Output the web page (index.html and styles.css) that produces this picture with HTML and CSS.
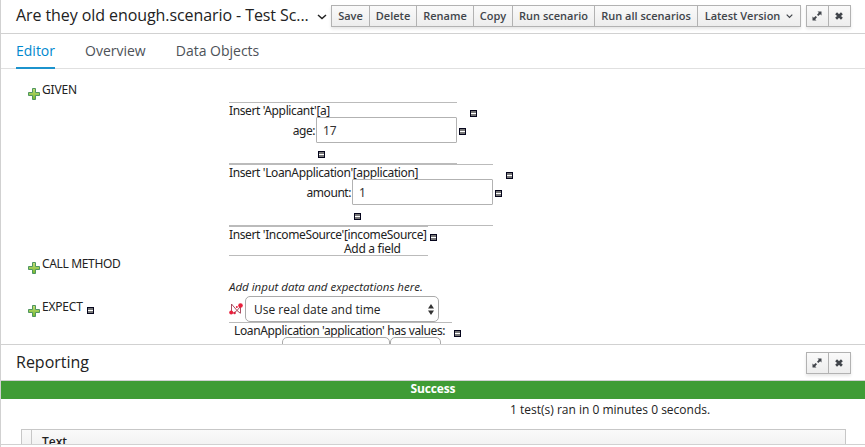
FILE: index.html
```html
<!DOCTYPE html>
<html lang="en">
<head>
<meta charset="utf-8">
<title>Test Scenario</title>
<link rel="stylesheet" href="styles.css">
</head>
<body>
<svg class="defs" width="0" height="0" aria-hidden="true">
  <defs>
    <linearGradient id="leaf" x1="0" y1="0" x2="0" y2="1"><stop offset="0" stop-color="#c5df78"/><stop offset="1" stop-color="#76b82c"/></linearGradient>
    <symbol id="plus" viewBox="0 0 12 12"><path d="M4.500 .5h3v4h4v3h-4v4h-3v-4h-4v-3h4z" fill="url(#leaf)" stroke="#4f9560"/></symbol>
    <symbol id="minus" viewBox="0 0 7 7"><path d="M0 0h7v7H0z" fill="#05051c"/><path d="M1 1h5v5H1z" fill="#777"/><path d="M1 3h5v1H1z" fill="#fff"/></symbol>
    <symbol id="expand" viewBox="0 0 10 10"><path d="M5.500 .5h4v4L8.200 3.200 6.300 5 5 3.700l1.800-1.900zM.5 5.500l1.300 1.300L3.700 5 5 6.300 3.200 8.200l1.300 1.300h-4z" fill="#41454b"/></symbol>
    <symbol id="close" viewBox="0 0 8 8"><path d="M1.100 1.300l5.800 5.400M6.900 1.300L1.100 6.700" stroke="#41454b" stroke-width="2.700"/></symbol>
  </defs>
</svg>
<main class="app">
  <header class="bar">
    <h1 class="title">Are they old enough.scenario - Test Sc...</h1>
    <svg class="title-caret" width="10" height="6" viewBox="0 0 10 6"><path d="M1 1l4 3.500L9 1" fill="none" stroke="#222" stroke-width="1.500"/></svg>
    <div class="buttons">
      <button class="b-save">Save</button><button class="b-delete">Delete</button><button class="b-rename">Rename</button><button class="b-copy">Copy</button><button class="b-run">Run scenario</button><button class="b-all">Run all scenarios</button><button class="b-version">Latest Version<svg width="7" height="5" viewBox="0 0 7 5"><path d="M.7 .7l2.800 2.800L6.300 .7" fill="none" stroke="#41454b" stroke-width="1.200"/></svg></button>
    </div>
    <div class="buttons tools"><button><svg width="10" height="10"><use href="#expand"/></svg></button><button><svg width="8" height="8"><use href="#close"/></svg></button></div>
  </header>
  <nav class="tabs"><a class="active">Editor</a><a>Overview</a><a>Data Objects</a></nav>
  <section class="editor">
    <div class="labels">
      <div class="label given"><svg width="12" height="12"><use href="#plus"/></svg><span>GIVEN</span></div>
      <div class="label call"><svg width="12" height="12"><use href="#plus"/></svg><span>CALL METHOD</span></div>
      <div class="label expect"><svg width="12" height="12"><use href="#plus"/></svg><span>EXPECT</span><svg class="label-minus" width="7" height="7"><use href="#minus"/></svg></div>
    </div>
    <div class="facts">
      <div class="fact-row">
        <div class="fact applicant">
          <p>Insert 'Applicant'[a]</p>
          <div class="field"><label>age:</label><input value="17"><svg width="7" height="7"><use href="#minus"/></svg></div>
          <svg class="below" width="7" height="7"><use href="#minus"/></svg>
        </div>
        <svg class="remove" width="7" height="7"><use href="#minus"/></svg>
      </div>
      <div class="fact-row">
        <div class="fact loan">
          <p>Insert 'LoanApplication'[application]</p>
          <div class="field"><label>amount:</label><input value="1"><svg width="7" height="7"><use href="#minus"/></svg></div>
          <svg class="below" width="7" height="7"><use href="#minus"/></svg>
        </div>
        <svg class="remove" width="7" height="7"><use href="#minus"/></svg>
      </div>
      <div class="fact-row income-row">
        <div class="fact income">
          <p>Insert 'IncomeSource'[incomeSource]</p>
          <p class="add">Add a field</p>
        </div>
        <svg class="remove" width="7" height="7"><use href="#minus"/></svg>
      </div>
      <p class="hint">Add input data and expectations here.</p>
      <div class="date-row">
        <svg width="14" height="12" viewBox="0 0 14 12"><path d="M2.500 9V1L8 7.500 11 4M11.500 3v7.500M5 10l3-2.500 3 2.500" fill="none" stroke="#a03a50" stroke-width=".9"/><circle cx="2.200" cy="9.500" r="2" fill="#e8203c"/><circle cx="5.500" cy="10" r="1.300" fill="#d92340"/><circle cx="11.500" cy="2.500" r="2.300" fill="#e8203c"/><circle cx="7.800" cy="4" r="1" fill="#e8203c"/></svg>
        <div class="select">Use real date and time<svg width="6" height="11" viewBox="0 0 6 11"><path d="M3 0l3 4.500H0zM0 6.500h6L3 11z" fill="#333"/></svg></div>
      </div>
      <div class="expect-row">
        <div class="values"><p>LoanApplication 'application' has values:</p><div class="pickers"><i></i><i></i></div></div>
        <svg class="remove" width="7" height="7"><use href="#minus"/></svg>
      </div>
    </div>
  </section>
  <header class="bar report-bar">
    <h2 class="title">Reporting</h2>
    <div class="buttons tools"><button><svg width="10" height="10"><use href="#expand"/></svg></button><button><svg width="8" height="8"><use href="#close"/></svg></button></div>
  </header>
  <section class="report">
    <div class="success"><span>Success</span></div>
    <p class="summary">1 test(s) ran in 0 minutes 0 seconds.</p>
    <div class="table"><span class="gutter"></span><span class="col">Text</span></div>
  </section>
</main>
</body>
</html>
```
FILE: styles.css
```css
* { box-sizing: border-box; }
body { margin: 0; background: #fff; color: #222; font: 12px/14px "Noto Sans", sans-serif; overflow: hidden; }
h1, h2, p { margin: 0; }
svg { display: block; flex: none; }
.defs { position: absolute; }
.app { height: 447px; border-left: 1px solid #d1d1d1; }
.bar { height: 34px; display: flex; align-items: flex-start; padding: 5px 14px 0 15px; border-bottom: 1px solid #d1d1d1; }
.title { font: 400 16px/21px "Open Sans", sans-serif; white-space: nowrap; color: #222; }
h1.title { width: 301px; letter-spacing: -.08px; }
.title-caret { margin: 9px 4px 0 0; }
.buttons { display: flex; height: 22px; border: 1px solid #b2b2b2; box-shadow: 0 2px 3px rgba(0,0,0,.1); background: linear-gradient(#fafafa, #ededed); }
.buttons button { display: flex; align-items: center; justify-content: center; padding: 0; border: 0; border-right: 1px solid #b2b2b2; background: none; color: #41454b; font: 600 11px/20px "Open Sans", sans-serif; white-space: nowrap; }
.buttons button:last-child { border-right: 0; }
.b-save { width: 38px; }
.b-delete { width: 47px; }
.b-rename { width: 57px; }
.b-copy { width: 39px; }
.b-run { width: 82px; }
.b-all { width: 103px; }
.b-version { width: 102px; }
.b-version svg { margin-left: 6px; }
.tools { margin-left: auto; width: 45px; flex: none; }
.tools button { width: 22px; }
.tabs { height: 35px; display: flex; gap: 30px; padding-left: 15px; border-bottom: 1px solid #e0e0e0; }
.tabs a { height: 35px; font: 14px/34px "Open Sans", sans-serif; color: #4d5258; }
.tabs .active { color: #0088ce; border-bottom: 2px solid #1c93cd; }
.editor { height: 275px; display: flex; overflow: hidden; }
.labels { width: 228px; padding-left: 27px; }
.label { display: flex; align-items: flex-start; height: 18px; letter-spacing: -.35px; }
.label > svg { margin-top: 5px; }
.label > svg:first-child { margin-right: 2px; }
.given { margin-top: 14px; }
.given, .expect { letter-spacing: -.2px; }
.call { margin-top: 156px; }
.expect { margin-top: 25px; }
.label .label-minus { margin: 7px 0 0 4px; }
.facts { padding-top: 33px; }
.fact-row, .expect-row { display: flex; align-items: flex-start; }
.fact { height: 62px; border-top: 1px solid #bbb; border-bottom: 1px solid #bbb; }
.fact p, .values p { height: 14px; line-height: 15px; white-space: nowrap; letter-spacing: -.37px; }
.applicant { width: 228px; }
.loan { width: 264px; }
.income { width: 199px; height: 30px; }
.remove { margin: 8px 0 0 13px; }
.income-row .remove { margin: 8px 0 0 2px; }
.field { display: flex; height: 26px; align-items: center; }
.field label { flex: 1; text-align: right; padding-right: 1px; letter-spacing: -.45px; position: relative; top: 1px; }
.field input { width: 141px; height: 26px; border: 1px solid #b2b2b2; border-radius: 1px; padding: 0 6px; font: 12px "Noto Sans", sans-serif; color: #333; }
.field svg { margin: 2px -9px 0 2px; }
.below { margin: 8px 0 0 89px; }
.loan .below { margin-left: 125px; }
.fact .add { padding-left: 115px; letter-spacing: -.3px; }
.hint { margin-top: 23px; height: 17px; line-height: 16px; font-family: "Open Sans", sans-serif; font-style: italic; font-size: 11.5px; }
.date-row { display: flex; height: 26px; align-items: center; gap: 2px; }
.select { width: 194px; height: 26px; display: flex; align-items: center; justify-content: space-between; border: 1px solid #aaa; border-radius: 5px; padding: 0 4px 0 8px; font: 12px "Open Sans", sans-serif; }
.values { width: 223px; border-top: 1px solid #bbb; }
.values p { padding-left: 5px; }
.expect-row .remove { margin-left: 2px; }
.pickers { display: flex; padding-left: 53px; }
.pickers i { width: 108px; height: 26px; flex: none; border: 1px solid #aaa; border-radius: 5px; }
.pickers i + i { width: 51px; }
.report-bar { height: 37px; border-top: 1px solid #d1d1d1; padding-top: 7px; }
.report { height: 64px; overflow: hidden; border-bottom: 1px solid #d1d1d1; }
.success { height: 18px; background: #3f9c35; color: #fff; font: 700 12px/16px "Open Sans", sans-serif; letter-spacing: -.15px; text-align: center; }
.summary { padding-left: 509px; height: 30px; line-height: 22px; font-family: "Open Sans", sans-serif; }
.table { display: flex; width: 825px; height: 27px; margin-left: 20px; border: 1px solid #c7c7c7; background: linear-gradient(#fafafa, #ededed); }
.gutter { width: 10px; border-right: 1px solid #c7c7c7; }
.col { padding-left: 10px; font: 600 12px/24px "Open Sans", sans-serif; }
```
